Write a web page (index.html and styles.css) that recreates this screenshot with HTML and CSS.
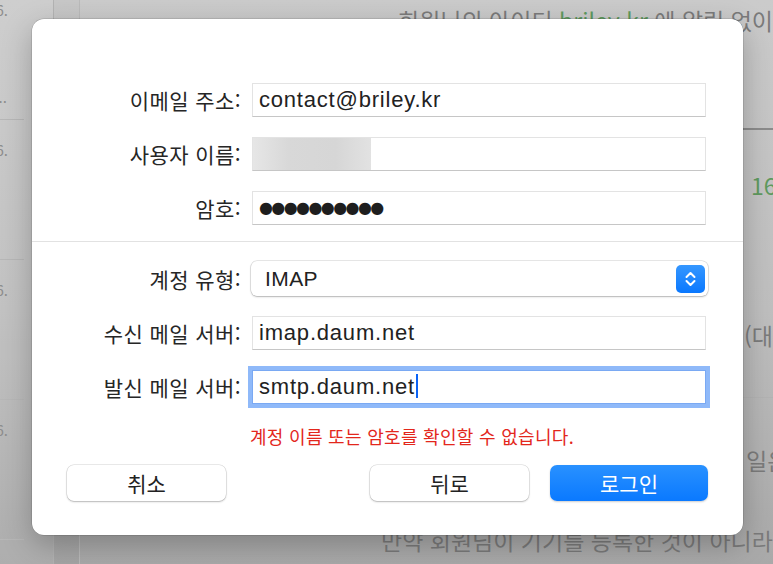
FILE: index.html
```html
<!DOCTYPE html>
<html lang="ko">
<head>
    <meta charset="UTF-8">
    <title>계정 추가</title>
    <link rel="stylesheet" href="styles.css">
</head>
<body>
    <div class="window">
        <div class="list">
            <div class="row">
                <div class="date">2023. 1. 6.</div>
                <div class="preview">새 기기 로그인...</div>
            </div>
            <div class="row"><div class="date">2023. 1. 6.</div></div>
            <div class="row"><div class="date">2023. 1. 6.</div></div>
            <div class="row"><div class="date">2023. 1. 6.</div></div>
            <div class="row"><div class="date">2023. 1. 6.</div></div>
        </div>
        <div class="gutter"></div>
        <div class="reader">
            <div class="line intro">회원님의 아이디 <span class="green">briley.kr</span> 에 알림 없이 로그인</div>
            <div class="rule dark"></div>
            <div class="line time"><span class="green">16:42 (KST)</span></div>
            <div class="line place">(대한민국)</div>
            <div class="rule"></div>
            <div class="line note">일은 본인이 맞는지 확인해 주세요.</div>
            <div class="line warn">만약 회원님이 기기를 등록한 것이 아니라면</div>
        </div>
    </div>

    <div class="sheet">
        <div class="fields">
            <label class="label">이메일 주소:</label>
            <div class="field">contact@briley.kr</div>
            <label class="label">사용자 이름:</label>
            <div class="field blank"><div class="blurred"></div></div>
            <label class="label">암호:</label>
            <div class="field"><span class="dots">●●●●●●●●●●</span></div>
        </div>

        <div class="divider"></div>

        <div class="fields">
            <label class="label">계정 유형:</label>
            <div class="popup">
                <span>IMAP</span>
                <span class="stepper">
                    <svg width="29" height="28" viewBox="0 0 29 28">
                        <path d="M10.5 12 L14.5 8 L18.5 12" fill="none" stroke="#fff" stroke-width="2" stroke-linecap="round" stroke-linejoin="round"/>
                        <path d="M10.5 16 L14.5 20 L18.5 16" fill="none" stroke="#fff" stroke-width="2" stroke-linecap="round" stroke-linejoin="round"/>
                    </svg>
                </span>
            </div>
            <label class="label">수신 메일 서버:</label>
            <div class="field">imap.daum.net</div>
            <label class="label">발신 메일 서버:</label>
            <div class="field focused">smtp.daum.net<span class="caret"></span></div>
        </div>

        <div class="error">계정 이름 또는 암호를 확인할 수 없습니다.</div>

        <div class="actions">
            <button class="btn">취소</button>
            <div class="right">
                <button class="btn">뒤로</button>
                <button class="btn primary">로그인</button>
            </div>
        </div>
    </div>
</body>
</html>
```

FILE: styles.css
```css
body {
    margin: 0;
    width: 773px;
    height: 564px;
    overflow: hidden;
    position: relative;
    font-family: 'Noto Sans CJK KR', sans-serif;
    background: linear-gradient(180deg, #cbcbcb 0%, #bfbfbf 55%, #a9a9a9 100%);
}

/* dimmed mail window behind the sheet */
.window {
    display: flex;
    height: 564px;
    white-space: nowrap;
}

.list {
    width: 200px;
    flex-shrink: 0;
    margin-left: -147px;
    margin-top: -20px;
    background: rgba(255, 255, 255, 0.06);
}

.row {
    height: 139px;
    margin-right: 29px;
    padding-right: 16px;
    border-bottom: 1px solid #b7b7b7;
    text-align: right;
    color: #8d8d8d;
    font-size: 15px;
    line-height: 20px;
}

.date {
    padding-top: 20px;
}

.preview {
    margin-top: 67px;
    margin-right: 1px;
}

.gutter {
    width: 25px;
    flex-shrink: 0;
    border-left: 1px solid #b3b3b3;
    border-right: 1px solid #bababa;
    background: rgba(0, 0, 0, 0.02);
}

.reader {
    flex: 1;
    padding-top: 5px;
    color: #7b7b7b;
    font-size: 23px;
    line-height: 30px;
}

.green {
    color: #5f9a5f;
}

.intro { padding-left: 318px; }
.time  { padding-left: 671px; margin-top: 40px; }
.place { padding-left: 664px; margin-top: 120px; }
.note  { padding-left: 666px; margin-top: 47px; }
.warn  { padding-left: 301px; margin-top: 50px; }

.rule {
    height: 1px;
    margin-left: 300px;
    margin-top: 47px;
    background: #b3b3b3;
}

.rule.dark {
    height: 2px;
    margin-top: 93px;
    background: #8c8c8c;
}

/* account sheet */
.sheet {
    position: absolute;
    left: 32px;
    top: 19px;
    width: 711px;
    box-sizing: border-box;
    padding: 64px 0 34px;
    background: #fff;
    border-radius: 12px;
    box-shadow: 0 0 0 0.5px rgba(0, 0, 0, 0.2), 0 10px 30px rgba(0, 0, 0, 0.25);
}

.fields {
    display: grid;
    grid-template-columns: 209px 454px;
    column-gap: 11px;
    row-gap: 20px;
    align-items: center;
}

.label {
    text-align: right;
    font-size: 21px;
    letter-spacing: 0.4px;
    color: #262626;
}

.field {
    height: 34px;
    box-sizing: border-box;
    padding: 0 6px;
    border: 1px solid #e3e3e3;
    border-bottom: 1.5px solid #c6c6c6;
    background: #fff;
    font-family: 'Liberation Sans', 'Noto Sans CJK KR', sans-serif;
    font-size: 22px;
    letter-spacing: 0.8px;
    line-height: 32px;
    color: #222;
}

.field.blank {
    padding: 0;
}

.blurred {
    width: 118px;
    height: 32px;
    background: linear-gradient(90deg, #e6e6e6 0%, #d8d8d8 30%, #d6d6d6 70%, #e2e2e2 100%);
}

.dots {
    font-family: 'DejaVu Sans', sans-serif;
    font-size: 16px;
    letter-spacing: -1.6px;
    color: #1e1e1e;
    vertical-align: top;
}

.divider {
    height: 1px;
    margin: 16px 0 19px;
    background: #e2e2e2;
}

.popup {
    height: 35px;
    margin: 0 -2px 0 -1px;
    padding-left: 14px;
    display: flex;
    align-items: center;
    border-radius: 6px;
    background: #fff;
    box-shadow: 0 0 0 0.5px rgba(0, 0, 0, 0.18), 0 1px 2px rgba(0, 0, 0, 0.22);
    font-family: 'Liberation Sans', sans-serif;
    font-size: 21px;
    letter-spacing: 0.4px;
    color: #222;
}

.stepper {
    margin-left: auto;
    margin-right: 3px;
    width: 29px;
    height: 28px;
    border-radius: 5px;
    background: linear-gradient(180deg, #3597ff, #0a78ff);
}

.stepper svg {
    display: block;
}

.field.focused {
    border-color: #7aa9f3;
    box-shadow: 0 0 0 4px #8fb9f9;
}

.caret {
    display: inline-block;
    width: 2px;
    height: 24px;
    margin-left: 1px;
    vertical-align: -4px;
    background: #0b63f6;
}

.error {
    margin-top: 21px;
    padding-left: 218px;
    font-size: 18px;
    letter-spacing: 0.3px;
    line-height: 22px;
    color: #e3271c;
}

.actions {
    display: flex;
    margin-top: 18px;
    padding: 0 35px;
}

.right {
    margin-left: auto;
    display: flex;
    gap: 21px;
}

.btn {
    width: 159px;
    height: 36px;
    border: none;
    border-radius: 7px;
    background: #fff;
    box-shadow: 0 0 0 0.5px rgba(0, 0, 0, 0.16), 0 1px 2px rgba(0, 0, 0, 0.22);
    font-family: 'Noto Sans CJK KR', sans-serif;
    font-size: 21px;
    color: #222;
    cursor: pointer;
}

.btn.primary {
    width: 158px;
    color: #fff;
    background: linear-gradient(180deg, #2991ff, #0a79ff);
    box-shadow: 0 1px 2px rgba(0, 0, 0, 0.2);
}
```
